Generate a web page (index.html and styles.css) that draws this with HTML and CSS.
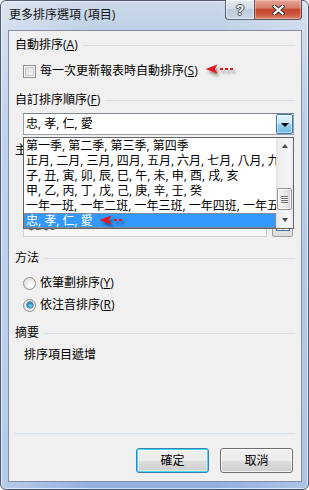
FILE: index.html
```html
<!DOCTYPE html>
<html lang="zh-Hant">
<head>
<meta charset="utf-8">
<link rel="stylesheet" href="styles.css">
</head>
<body>
<div class="window">
  <div class="titlebar">
    <div class="title">更多排序選項 (項目)</div>
    <div class="caption-buttons">
      <div class="cap-btn help"><span class="help-glyph">?</span></div>
      <div class="cap-btn close">
        <svg width="13" height="10" viewBox="0 0 13 10">
          <path d="M2.5 1.5 L10.5 8.5 M10.5 1.5 L2.5 8.5" stroke="#3a3a3a" stroke-width="4.2" stroke-linecap="square" fill="none"/>
          <path d="M2.5 1.5 L10.5 8.5 M10.5 1.5 L2.5 8.5" stroke="#ffffff" stroke-width="2.2" stroke-linecap="square" fill="none"/>
        </svg>
      </div>
    </div>
  </div>
  <div class="client">
    <div class="heading"><span>自動排序(<u>A</u>)</span></div>
    <div class="opt-row">
      <span class="checkbox"></span>
      <span class="opt-label">每一次更新報表時自動排序(<u>S</u>)</span>
      <svg class="red-arrow" width="30" height="16" viewBox="0 0 30 16">
        <defs><filter id="sh1" x="-30%" y="-40%" width="170%" height="220%"><feDropShadow dx="2" dy="3" stdDeviation="1.4" flood-color="#000" flood-opacity="0.45"/></filter></defs>
        <g filter="url(#sh1)" fill="#e3121b">
          <path d="M0.5 7 L12.5 2.5 L9.8 7 L12.5 11.5 Z"/>
          <rect x="15" y="6" width="3" height="2"/>
          <rect x="20" y="6" width="3" height="2"/>
          <rect x="25" y="6" width="3" height="2"/>
        </g>
      </svg>
    </div>

    <div class="heading gap-13"><span>自訂排序順序(<u>F</u>)</span></div>
    <div class="combo">
      <div class="combo-text">忠, 孝, 仁, 愛</div>
      <div class="combo-btn"><span class="tri-down"></span></div>
      <div class="droplist">
        <div class="rows">
          <div class="row">第一季, 第二季, 第三季, 第四季</div>
          <div class="row">正月, 二月, 三月, 四月, 五月, 六月, 七月, 八月, 九月, 十月, 十一月, 十二月</div>
          <div class="row">子, 丑, 寅, 卯, 辰, 巳, 午, 未, 申, 酉, 戌, 亥</div>
          <div class="row">甲, 乙, 丙, 丁, 戊, 己, 庚, 辛, 壬, 癸</div>
          <div class="row">一年一班, 一年二班, 一年三班, 一年四班, 一年五班, 一年六班</div>
          <div class="row selected">忠, 孝, 仁, 愛<svg class="red-arrow arrow-in-list" width="30" height="16" viewBox="0 0 30 16">
              <defs><filter id="sh2" x="-30%" y="-40%" width="170%" height="220%"><feDropShadow dx="2" dy="3" stdDeviation="1.4" flood-color="#000" flood-opacity="0.45"/></filter></defs>
              <g filter="url(#sh2)" fill="#e3121b">
                <path d="M0.5 7 L12.5 2.5 L9.8 7 L12.5 11.5 Z"/>
                <rect x="15" y="6" width="3" height="2"/>
                <rect x="20" y="6" width="3" height="2"/>
              </g>
            </svg></div>
        </div>
        <div class="scrollbar">
          <div class="sb-btn"><span class="tri-up-sm"></span></div>
          <div class="sb-track">
            <div class="sb-thumb"><span></span><span></span><span></span><span></span></div>
          </div>
          <div class="sb-btn"><span class="tri-down-sm"></span></div>
        </div>
      </div>
    </div>

    <div class="heading gap-7"><span>主</span></div>
    <div class="refbox">
      <div class="ref-input">$B$5</div>
      <div class="ref-btn">
        <svg width="14" height="10" viewBox="0 0 14 10">
          <rect x="0.5" y="0.5" width="13" height="9" fill="#fff" stroke="#4a6fa5"/>
          <rect x="1" y="1" width="12" height="2" fill="#4a7fc8"/>
          <rect x="1" y="5" width="12" height="1" fill="#9db7dc"/>
          <rect x="6.5" y="3" width="1" height="6" fill="#9db7dc"/>
        </svg>
      </div>
    </div>

    <div class="heading gap-13"><span>方法</span></div>
    <div class="opt-row gap-9"><span class="radio"></span><span class="opt-label">依筆劃排序(<u>Y</u>)</span></div>
    <div class="opt-row gap-6"><span class="radio checked"></span><span class="opt-label">依注音排序(<u>R</u>)</span></div>

    <div class="heading gap-12"><span>摘要</span></div>
    <div class="summary">排序項目遞增</div>

    <div class="footer">
      <div class="separator"></div>
      <div class="buttons">
        <div class="btn default">確定</div>
        <div class="btn">取消</div>
      </div>
    </div>
  </div>
</div>
</body>
</html>
```

FILE: styles.css
```css
* { box-sizing: border-box; }
html, body { margin: 0; padding: 0; }
body {
  width: 309px;
  height: 490px;
  overflow: hidden;
  background: #ffffff;
  font-family: "Open Sans", "Noto Sans CJK TC", sans-serif;
  font-size: 12px;
  color: #000;
}
u { text-decoration: underline; text-underline-offset: 1px; }

.window {
  width: 309px;
  height: 490px;
  border: 1px solid #4b5b74;
  border-radius: 6px;
  background:
    linear-gradient(to right, rgba(255,255,255,0.35), rgba(255,255,255,0) 30%, rgba(255,255,255,0) 70%, rgba(255,255,255,0.25)),
    linear-gradient(to bottom, #cbd8ea 0px, #bfd0e6 29px, #a3bde4 120px, #93b0e0 100%);
  box-shadow: inset 0 0 0 1px rgba(255,255,255,0.6);
  display: flex;
  flex-direction: column;
}

.titlebar {
  height: 29px;
  flex: none;
  display: flex;
  align-items: flex-start;
}
.title {
  padding: 6px 0 0 8px;
  line-height: 16px;
  font-size: 12px;
  color: #111;
}
.caption-buttons {
  margin-left: auto;
  margin-right: 6px;
  display: flex;
  margin-top: -1px;
}
.cap-btn {
  height: 20px;
  display: flex;
  align-items: center;
  justify-content: center;
  border: 1px solid rgba(45, 60, 85, 0.75);
  border-top: none;
}
.help {
  width: 29px;
  border-right: none;
  border-bottom-left-radius: 4px;
  background: linear-gradient(to bottom, #e3e9f1 0%, #d3dde9 45%, #bccadb 50%, #c9d6e6 100%);
  box-shadow: inset 0 0 0 1px rgba(255,255,255,0.55);
}
.help-glyph {
  font-family: "Liberation Sans", sans-serif;
  font-weight: bold;
  font-size: 14px;
  line-height: 14px;
  color: #f4f6f9;
  text-shadow: 0 0 1px #333, 1px 0 0 #555, -1px 0 0 #555, 0 1px 0 #555, 0 -1px 0 #555;
  margin-top: 1px;
}
.close {
  width: 48px;
  border-bottom-right-radius: 4px;
  background: linear-gradient(to bottom, #e5a596 0%, #d9806c 40%, #c4442c 52%, #cf5a42 80%, #e08a6c 100%);
  box-shadow: inset 0 0 0 1px rgba(255,220,210,0.45);
}

.client {
  flex: 1;
  margin: 0 6px 7px 7px;
  border: 1px solid #7f90a8;
  background: #f0f0f0;
  display: flex;
  flex-direction: column;
  padding: 6px 6px 8px 6px;
}

.heading {
  display: flex;
  align-items: center;
  height: 16px;
  line-height: 16px;
  white-space: nowrap;
}
.heading::after {
  content: "";
  flex: 1;
  height: 1px;
  background: #d5dfe5;
  margin-left: 5px;
}
.gap-5 { margin-top: 5px; }
.gap-6 { margin-top: 6px; }
.gap-7 { margin-top: 7px; }
.gap-9 { margin-top: 9px; }
.gap-12 { margin-top: 12px; }
.gap-13 { margin-top: 13px; }

.opt-row {
  display: flex;
  align-items: center;
  height: 16px;
  line-height: 16px;
  margin-left: 8px;
  white-space: nowrap;
}
.heading + .opt-row:not([class*="gap-"]) { margin-top: 10px; }
.opt-label { margin-left: 4px; }

.checkbox {
  width: 13px;
  height: 13px;
  flex: none;
  border: 1px solid #8e8f8f;
  box-shadow: inset 0 0 0 1px #f4f4f4, inset 0 0 0 2px #c9c9c9;
  background-image: linear-gradient(135deg, #d8d8d8, #f8f8f8);
}
.radio {
  width: 13px;
  height: 13px;
  flex: none;
  border-radius: 50%;
  border: 1px solid #8e8f8f;
  background: radial-gradient(circle at 60% 65%, #ffffff 0, #f0f0f0 40%, #d3d3d3 100%);
  position: relative;
}
.radio.checked::after {
  content: "";
  position: absolute;
  left: 2.5px;
  top: 2.5px;
  width: 6px;
  height: 6px;
  border-radius: 50%;
  background: radial-gradient(circle at 55% 60%, #8fe0ff 0, #2f9ad6 40%, #0c4e7e 100%);
  box-shadow: 0 0 0 0.5px #1a4d75;
}

.red-arrow { flex: none; overflow: visible; }
.opt-row .red-arrow { margin-left: 7px; margin-top: -2px; }

.combo {
  position: relative;
  margin: 5px 1px 0 8px;
  height: 22px;
  display: flex;
  border: 1px solid #9aa0a8;
  border-top-color: #7f868e;
  background: #fff;
}
.combo-text {
  flex: 1;
  padding-left: 2px;
  line-height: 20px;
  white-space: nowrap;
}
.combo-btn {
  width: 17px;
  height: 20px;
  border: 1px solid #3d7bad;
  border-radius: 2px;
  background: linear-gradient(to bottom, #e6f5fc 0%, #c9e8f8 45%, #9dd4f1 50%, #6fb8e3 100%);
  box-shadow: inset 0 0 0 1px rgba(255,255,255,0.5);
  display: flex;
  align-items: center;
  justify-content: center;
}
.tri-down {
  width: 0; height: 0;
  border-left: 4px solid transparent;
  border-right: 4px solid transparent;
  border-top: 4px solid #000;
  margin-top: 1px;
}

.droplist {
  position: absolute;
  left: -1px;
  top: 23px;
  width: 271px;
  height: 92px;
  border: 1px solid #646464;
  background: #fff;
  display: flex;
  z-index: 5;
}
.rows {
  flex: 1;
  min-width: 0;
}
.row {
  height: 15px;
  line-height: 15px;
  padding-left: 2px;
  white-space: nowrap;
  overflow: hidden;
}
.row.selected {
  background: #3399ff;
  color: #fff;
  outline: 1px dotted #c8783a;
  outline-offset: -1px;
  overflow: visible;
  display: flex;
  align-items: center;
}
.arrow-in-list { margin-left: 6px; margin-top: 1px; }

.scrollbar {
  width: 17px;
  flex: none;
  display: flex;
  flex-direction: column;
  background: linear-gradient(to right, #e3e3e3 0, #eeeeee 3px, #f6f6f6 14px, #e8e8e8 17px);
}
.sb-btn {
  height: 17px;
  flex: none;
  display: flex;
  align-items: center;
  justify-content: center;
}
.tri-up-sm, .tri-down-sm {
  width: 0; height: 0;
  border-left: 3.5px solid transparent;
  border-right: 3.5px solid transparent;
}
.tri-up-sm { border-bottom: 4px solid #4a4a4a; margin-top: -1px; }
.tri-down-sm { border-top: 4px solid #4a4a4a; margin-top: 1px; }
.sb-track {
  flex: 1;
  display: flex;
  flex-direction: column;
}
.sb-thumb {
  margin: auto 0 1px 1px;
  width: 15px;
  height: 22px;
  border: 1px solid #959595;
  border-radius: 2px;
  background: linear-gradient(to right, #f3f3f3 0%, #e8e8e8 50%, #d6d6d6 100%);
  box-shadow: inset 0 0 0 1px rgba(255,255,255,0.7);
  display: flex;
  flex-direction: column;
  justify-content: center;
  align-items: center;
  gap: 1px;
}
.sb-thumb span {
  width: 7px;
  height: 1px;
  background: #6f6f6f;
  box-shadow: 0 1px 0 #fafafa;
}

.refbox {
  display: flex;
  margin: 57px 2px 0 8px;
  height: 22px;
}
.ref-input {
  flex: 1;
  border: 1px solid #d0d0d0;
  background: #f7f7f7;
  color: #6d6d6d;
  line-height: 20px;
  padding-left: 4px;
  font-family: "Liberation Sans", sans-serif;
}
.ref-btn {
  width: 21px;
  margin-left: 5px;
  border: 1px solid #a0a0a0;
  border-radius: 2px;
  background: linear-gradient(#f4f4f4, #dcdcdc);
  display: flex;
  align-items: center;
  justify-content: center;
}

.summary {
  margin-top: 6px;
  margin-left: 9px;
  height: 16px;
  line-height: 16px;
}

.footer {
  margin-top: auto;
}
.separator {
  height: 1px;
  background: #d5dfe5;
  margin-left: -1px;
}
.buttons {
  margin-top: 14px;
  display: flex;
  justify-content: flex-end;
  gap: 11px;
  margin-right: 2px;
}
.btn {
  width: 73px;
  height: 25px;
  border: 1px solid #707070;
  border-radius: 3px;
  background: linear-gradient(to bottom, #f2f2f2 0%, #ebebeb 50%, #dddddd 51%, #cfcfcf 100%);
  box-shadow: inset 0 0 0 1px rgba(255,255,255,0.75);
  display: flex;
  align-items: center;
  justify-content: center;
  line-height: 16px;
}
.btn.default {
  border-color: #3c7fb1;
  box-shadow: inset 0 0 0 1px #48d8fb, inset 0 0 0 2px rgba(255,255,255,0.4);
}
```
